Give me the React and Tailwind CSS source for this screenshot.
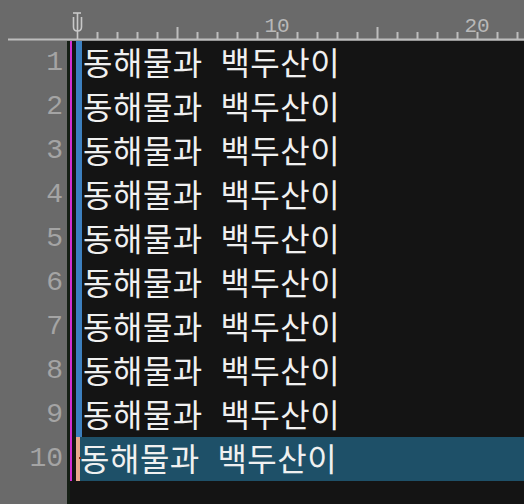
export default function App() {
  const lines = [1, 2, 3, 4, 5, 6, 7, 8, 9, 10];
  const ticks = [];
  for (let k = 1; k <= 23; k++) {
    const x = 77 + 20 * k;
    if (x > 524) break;
    const tall = k % 5 === 0 && k % 10 !== 0;
    ticks.push(
      <line
        key={k}
        x1={x + 0.5}
        x2={x + 0.5}
        y1={tall ? 27 : 32}
        y2={39}
        stroke="#bdbdbd"
        strokeWidth="2"
      />
    );
  }
  return (
    <div className="w-[524px] h-[504px] bg-[#6a6a6a] overflow-hidden flex flex-col">
      <div className="h-[41px] shrink-0">
        <svg width="524" height="41" className="block">
          <rect x="8" y="38.5" width="516" height="2" fill="#bdbdbd" />
          {ticks}
          <path d="M73 13 H81" stroke="#c8c8c8" strokeWidth="1.6" fill="none" />
          <path d="M77.5 13 V39" stroke="#c8c8c8" strokeWidth="1.6" fill="none" />
          <path d="M73.5 17 V27 Q73.5 31 77.5 31 Q81.5 31 81.5 27 V17" stroke="#c8c8c8" strokeWidth="1.6" fill="none" />
          <text x="277" y="32" textAnchor="middle" fill="#b8b8b8" fontSize="21" fontFamily="'Liberation Mono', monospace">10</text>
          <text x="477" y="32" textAnchor="middle" fill="#b8b8b8" fontSize="21" fontFamily="'Liberation Mono', monospace">20</text>
        </svg>
      </div>
      <div className="flex flex-1">
        <div className="w-[67px] shrink-0 flex flex-col">
          {lines.map((n) => (
            <div
              key={n}
              className="h-[44px] flex items-center justify-end pr-[4px] text-[28px] text-[#a4a4a4] font-['Liberation_Mono',monospace] leading-none"
            >
              {n}
            </div>
          ))}
        </div>
        <div className="flex-1 bg-[#141414] flex flex-col">
          {lines.map((n) => {
            const last = n === 10;
            return (
              <div key={n} className="h-[44px] flex items-stretch">
                <div className="w-[3px] shrink-0 bg-[#151f15]" />
                <div className="w-[2px] shrink-0 bg-[#d42fd4]" />
                <div className="w-[4px] shrink-0" />
                {last ? (
                  <div className="w-[4px] shrink-0 bg-[#eaa88c] relative">
                    <div className="absolute left-[3px] top-[20px] w-[2px] h-[2px] bg-[#8a2a10]" />
                  </div>
                ) : (
                  <div className="w-[6px] shrink-0 bg-[#3c7fbf]" />
                )}
                <div
                  className={
                    "flex-1 flex items-center text-[32px] leading-none tracking-[0.5px] [word-spacing:10px] text-[#f0f0f0] font-['Noto_Sans_CJK_KR',sans-serif] pb-[5px] whitespace-pre " +
                    (last ? "bg-[#1e5068] pl-[0px]" : "pl-[1px]")
                  }
                >
                  동해물과 백두산이
                </div>
              </div>
            );
          })}
          <div className="flex-1 flex">
            <div className="w-[3px] shrink-0 bg-[#151f15]" />
          </div>
        </div>
      </div>
    </div>
  );
}
